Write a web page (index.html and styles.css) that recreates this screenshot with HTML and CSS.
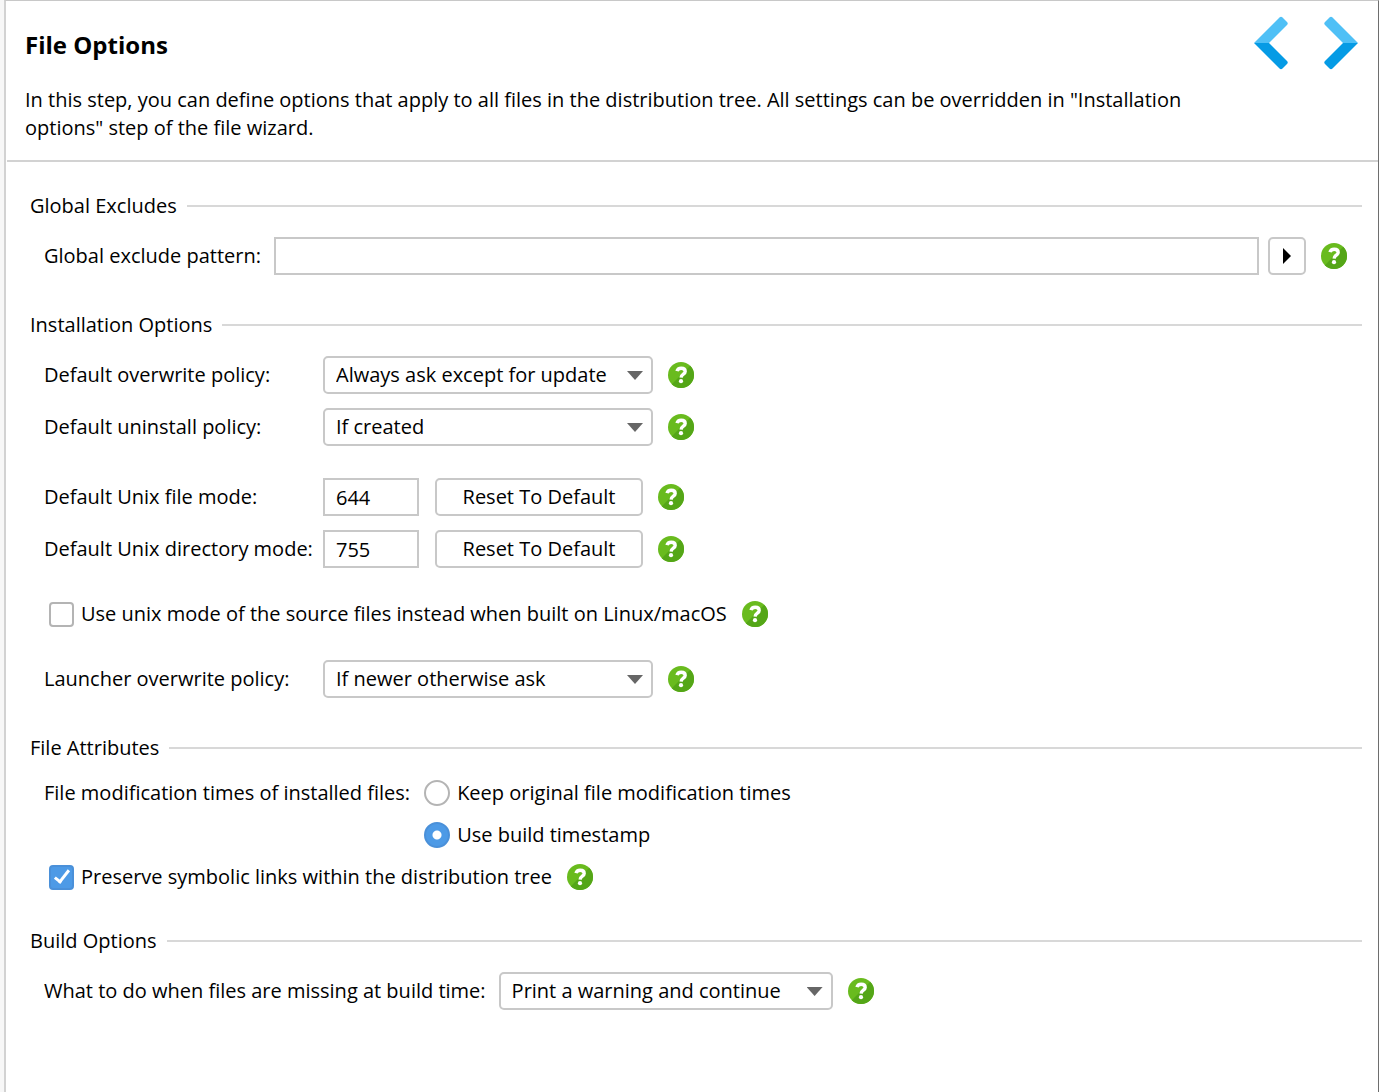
FILE: index.html
```html
<!DOCTYPE html>
<html lang="en">
<head>
    <meta charset="utf-8">
    <title>File Options</title>
    <link rel="stylesheet" href="styles.css">
</head>
<body>
    <!-- shared icon, used by every help button -->
    <svg class="defs" aria-hidden="true">
        <symbol id="help" viewBox="0 0 26 26">
            <circle cx="13" cy="13" r="13" fill="#69bb1e"/>
            <path d="M22.2 3.8A13 13 0 0 1 3.8 22.2Z" fill="#54a617"/>
            <path d="M9 9.2C9.5 7.2 11.1 6.200 13.200 6.200C15.500 6.200 17.200 7.400 17.200 9.400C17.200 12.200 13.200 12 13.100 15.600" fill="none" stroke="#fff" stroke-width="3.400"/>
            <circle cx="13" cy="19.200" r="2.100" fill="#fff"/>
        </symbol>
    </svg>

    <main class="page">
        <header class="header">
            <div class="intro">
                <h1>File Options</h1>
                <p>In this step, you can define options that apply to all files in the distribution tree. All settings can be overridden in "Installation options" step of the file wizard.</p>
            </div>
            <nav class="nav">
                <button type="button" aria-label="Previous step">
                    <svg width="34" height="54" viewBox="0 0 34 54">
                        <path d="M0 27L25.500 1.500Q27 0 28.500 1.500L33 6Q34.500 7.500 33 9L15 27Z" fill="#4fc0f6"/>
                        <path d="M0 27L25.500 52.500Q27 54 28.500 52.500L33 48Q34.500 46.500 33 45L15 27Z" fill="#059be5"/>
                    </svg>
                </button>
                <button type="button" aria-label="Next step">
                    <svg width="34" height="54" viewBox="0 0 34 54">
                        <path d="M34 27L8.500 1.500Q7 0 5.500 1.500L1 6Q-.5 7.500 1 9L19 27Z" fill="#4fc0f6"/>
                        <path d="M34 27L8.500 52.500Q7 54 5.500 52.500L1 48Q-.5 46.500 1 45L19 27Z" fill="#059be5"/>
                    </svg>
                </button>
            </nav>
        </header>

        <form class="options">
            <section>
                <h2>Global Excludes</h2>
                <div class="row">
                    <label for="exclude">Global exclude pattern:</label>
                    <input type="text" id="exclude" class="wide">
                    <button type="button" class="btn more" aria-label="Insert variable"></button>
                    <button type="button" class="help" aria-label="Help"><svg><use href="#help"/></svg></button>
                </div>
            </section>

            <section class="aligned">
                <h2>Installation Options</h2>
                <div class="group">
                    <div class="row">
                        <label for="overwrite">Default overwrite policy:</label>
                        <span class="select"><select id="overwrite"><option>Always ask except for update</option></select></span>
                        <button type="button" class="help" aria-label="Help"><svg><use href="#help"/></svg></button>
                    </div>
                    <div class="row">
                        <label for="uninstall">Default uninstall policy:</label>
                        <span class="select"><select id="uninstall"><option>If created</option></select></span>
                        <button type="button" class="help" aria-label="Help"><svg><use href="#help"/></svg></button>
                    </div>
                </div>
                <div class="group">
                    <div class="row">
                        <label for="fileMode">Default Unix file mode:</label>
                        <input type="text" id="fileMode" class="mode" value="644">
                        <button type="button" class="btn reset">Reset To Default</button>
                        <button type="button" class="help" aria-label="Help"><svg><use href="#help"/></svg></button>
                    </div>
                    <div class="row">
                        <label for="dirMode">Default Unix directory mode:</label>
                        <input type="text" id="dirMode" class="mode" value="755">
                        <button type="button" class="btn reset">Reset To Default</button>
                        <button type="button" class="help" aria-label="Help"><svg><use href="#help"/></svg></button>
                    </div>
                </div>
                <div class="group">
                    <div class="row check">
                        <input type="checkbox" id="unixMode">
                        <label for="unixMode">Use unix mode of the source files instead when built on Linux/macOS</label>
                        <button type="button" class="help" aria-label="Help"><svg><use href="#help"/></svg></button>
                    </div>
                </div>
                <div class="group">
                    <div class="row">
                        <label for="launcher">Launcher overwrite policy:</label>
                        <span class="select"><select id="launcher"><option>If newer otherwise ask</option></select></span>
                        <button type="button" class="help" aria-label="Help"><svg><use href="#help"/></svg></button>
                    </div>
                </div>
            </section>

            <section>
                <h2>File Attributes</h2>
                <div class="group">
                    <div class="times" role="radiogroup" aria-labelledby="timesLabel">
                        <span id="timesLabel">File modification times of installed files:</span>
                        <div class="group">
                            <div class="row radio">
                                <input type="radio" name="times" id="keep">
                                <label for="keep">Keep original file modification times</label>
                            </div>
                            <div class="row radio">
                                <input type="radio" name="times" id="build" checked>
                                <label for="build">Use build timestamp</label>
                            </div>
                        </div>
                    </div>
                    <div class="row check">
                        <input type="checkbox" id="symlinks" checked>
                        <label for="symlinks">Preserve symbolic links within the distribution tree</label>
                        <button type="button" class="help" aria-label="Help"><svg><use href="#help"/></svg></button>
                    </div>
                </div>
            </section>

            <section>
                <h2>Build Options</h2>
                <div class="row">
                    <label for="missing">What to do when files are missing at build time:</label>
                    <span class="select"><select id="missing"><option>Print a warning and continue</option></select></span>
                    <button type="button" class="help" aria-label="Help"><svg><use href="#help"/></svg></button>
                </div>
            </section>
        </form>
    </main>
</body>
</html>
```
FILE: styles.css
```css
* {
    box-sizing: border-box;
}

body {
    margin: 0;
    padding-left: 4px;
    background-color: #f7f7f7;
    color: #000;
    font-family: "Open Sans", "Noto Sans", sans-serif;
    font-size: 20px;
    line-height: 28px;
}

h1, h2, p {
    margin: 0;
}

button, input, select {
    margin: 0;
    color: inherit;
    font: inherit;
}

.defs {
    position: absolute;
    width: 0;
    height: 0;
}

.page {
    min-height: 100vh;
    padding-left: 1px;
    background-color: #fff;
    border-top: 1px solid #c8c8c8;
    border-left: 2px solid #d2d2d2;
    border-right: 1px solid #6e6e6e;
}

.header {
    display: flex;
    justify-content: space-between;
    padding: 15px 20px 18px 18px;
    border-bottom: 2px solid #d2d2d2;
}

.intro {
    max-width: 1180px;
    padding-top: 15px;
}

h1 {
    margin-bottom: 27px;
    font-size: 24px;
    line-height: 28px;
}

.nav {
    display: flex;
    flex-shrink: 0;
    gap: 36px;
}

.nav button {
    height: 54px;
    padding: 0;
    background: none;
    border: none;
}

.options {
    padding: 30px 16px 36px 23px;
}

section {
    margin-bottom: 36px;
}

h2 {
    display: flex;
    align-items: center;
    gap: 10px;
    margin-bottom: 17px;
    font-size: 20px;
    font-weight: normal;
}

h2::after {
    content: "";
    flex: 1;
    height: 2px;
    background-color: #d8d8d8;
}

.row {
    display: flex;
    align-items: center;
    padding: 0 15px 0 14px;
}

.row > label {
    margin-right: 13px;
}

.aligned .row > label {
    width: 266px;
    white-space: nowrap;
}

.group {
    display: flex;
    flex-direction: column;
    gap: 14px;
}

.group + .group {
    margin-top: 32px;
}

input[type="text"] {
    height: 38px;
    padding: 0 11px;
    background-color: #fff;
    border: 2px solid #c8c8c8;
}

.wide {
    flex: 1;
    min-width: 0;
}

.mode {
    width: 96px;
}

.btn {
    height: 38px;
    padding: 0;
    background-color: #fff;
    border: 2px solid #c8c8c8;
    border-radius: 5px;
}

.more {
    display: flex;
    align-items: center;
    justify-content: center;
    width: 38px;
    margin-left: 9px;
}

.more::after {
    content: "";
    width: 8px;
    height: 16px;
    background-color: #000;
    clip-path: polygon(0 0, 100% 50%, 0 100%);
}

.reset {
    width: 208px;
    margin-left: 16px;
}

.select {
    position: relative;
}

.select select {
    display: block;
    width: 330px;
    height: 38px;
    padding: 0 40px 0 11px;
    appearance: none;
    background-color: #fff;
    border: 2px solid #c8c8c8;
    border-radius: 5px;
}

.select #missing {
    width: 334px;
}

.select::after {
    content: "";
    position: absolute;
    top: 15px;
    right: 10px;
    width: 16px;
    height: 9px;
    background-color: #666;
    clip-path: polygon(0 0, 100% 0, 50% 100%);
    pointer-events: none;
}

.help {
    width: 26px;
    height: 26px;
    margin-left: 15px;
    padding: 0;
    background: none;
    border: none;
    border-radius: 50%;
}

.help svg {
    display: block;
    width: 26px;
    height: 26px;
}

.check {
    padding-left: 19px;
}

.row.check > label, .row.radio > label {
    width: auto;
    margin-right: 0;
}

input[type="checkbox"], input[type="radio"] {
    flex-shrink: 0;
    width: 25px;
    height: 25px;
    margin-right: 7px;
    appearance: none;
    background-color: #fff;
    border: 2px solid #b4b4b4;
    border-radius: 4px;
}

input[type="radio"] {
    width: 26px;
    height: 26px;
    border-radius: 50%;
}

input[type="checkbox"]:checked {
    display: flex;
    justify-content: center;
    background-color: #4d9ae6;
    border-color: #4a90d9;
}

input[type="checkbox"]:checked::after {
    content: "";
    width: 5px;
    height: 13px;
    border: solid #fff;
    border-width: 0 3px 3px 0;
    transform: rotate(38deg);
}

input[type="radio"]:checked {
    background: radial-gradient(circle, #fff 4px, #4d9ae6 5px);
    border-color: #4a90d9;
}

.times {
    display: flex;
    padding-left: 14px;
}
```
